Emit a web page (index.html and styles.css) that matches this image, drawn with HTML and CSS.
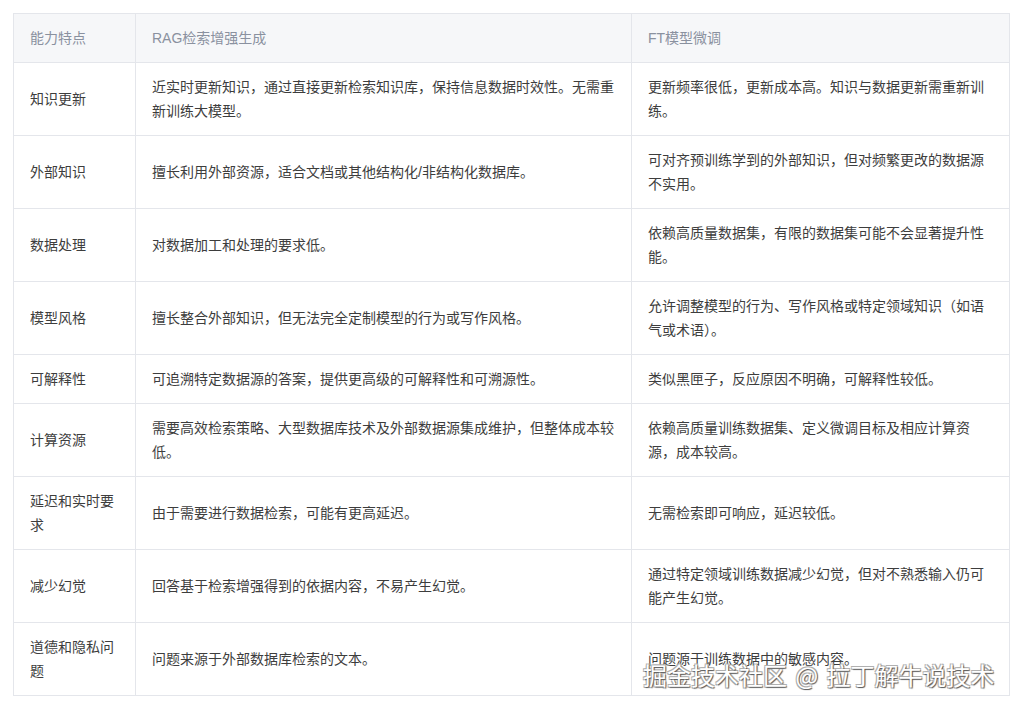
FILE: index.html
```html
<!DOCTYPE html>
<html>
  <head>
    <title>RAG vs FT</title>
    <link rel="stylesheet" href="styles.css">
  </head>
  <body>
    <div id="page">
      <table id="compare-table">
        <colgroup>
          <col class="col-feature">
          <col class="col-rag">
          <col class="col-ft">
        </colgroup>
        <thead>
          <tr>
            <th>能力特点</th>
            <th>RAG检索增强生成</th>
            <th>FT模型微调</th>
          </tr>
        </thead>
        <tbody>
          <tr>
            <td>知识更新</td>
            <td>近实时更新知识，通过直接更新检索知识库，保持信息数据时效性。无需重新训练大模型。</td>
            <td>更新频率很低，更新成本高。知识与数据更新需重新训练。</td>
          </tr>
          <tr>
            <td>外部知识</td>
            <td>擅长利用外部资源，适合文档或其他结构化/非结构化数据库。</td>
            <td>可对齐预训练学到的外部知识，但对频繁更改的数据源不实用。</td>
          </tr>
          <tr>
            <td>数据处理</td>
            <td>对数据加工和处理的要求低。</td>
            <td>依赖高质量数据集，有限的数据集可能不会显著提升性能。</td>
          </tr>
          <tr>
            <td>模型风格</td>
            <td>擅长整合外部知识，但无法完全定制模型的行为或写作风格。</td>
            <td>允许调整模型的行为、写作风格或特定领域知识（如语气或术语）。</td>
          </tr>
          <tr>
            <td>可解释性</td>
            <td>可追溯特定数据源的答案，提供更高级的可解释性和可溯源性。</td>
            <td>类似黑匣子，反应原因不明确，可解释性较低。</td>
          </tr>
          <tr>
            <td>计算资源</td>
            <td>需要高效检索策略、大型数据库技术及外部数据源集成维护，但整体成本较低。</td>
            <td>依赖高质量训练数据集、定义微调目标及相应计算资源，成本较高。</td>
          </tr>
          <tr>
            <td>延迟和实时要求</td>
            <td>由于需要进行数据检索，可能有更高延迟。</td>
            <td>无需检索即可响应，延迟较低。</td>
          </tr>
          <tr>
            <td>减少幻觉</td>
            <td>回答基于检索增强得到的依据内容，不易产生幻觉。</td>
            <td>通过特定领域训练数据减少幻觉，但对不熟悉输入仍可能产生幻觉。</td>
          </tr>
          <tr>
            <td>道德和隐私问题</td>
            <td>问题来源于外部数据库检索的文本。</td>
            <td>问题源于训练数据中的敏感内容。</td>
          </tr>
        </tbody>
      </table>
      <div class="watermark">掘金技术社区 @ 拉丁解牛说技术</div>
    </div>
  </body>
</html>
```

FILE: styles.css
```css
* {
  margin: 0;
  padding: 0;
  box-sizing: border-box;
}

body {
  font-family: "Liberation Sans", "Noto Sans CJK SC", sans-serif;
  background-color: #ffffff;
  color: #3d3d3d;
  font-size: 14px;
}

#page {
  position: relative;
  padding: 13px 13px 0 13px;
}

#compare-table {
  width: 996px;
  table-layout: fixed;
  border-collapse: collapse;
  border: 1px solid #e4e6eb;
}

.col-feature {
  width: 122px;
}

.col-rag {
  width: 496px;
}

.col-ft {
  width: 378px;
}

#compare-table th,
#compare-table td {
  border: 1px solid #e4e6eb;
  padding: 12px 16px;
  line-height: 24px;
  text-align: left;
  vertical-align: middle;
}

#compare-table th {
  background-color: #f6f7f9;
  color: #8a919f;
  font-weight: normal;
}

/* watermark sits over the last row, as in the source image */
.watermark {
  position: absolute;
  left: 643px;
  top: 660px;
  font-family: "Noto Sans CJK SC", sans-serif;
  font-size: 24px;
  line-height: 30px;
  word-spacing: 3px;
  color: #ffffff;
  white-space: nowrap;
  text-shadow: 1px 1px 1px #5a5a5a, -1px -1px 0 #b0b0b0, 1px -1px 0 #b0b0b0, -1px 1px 0 #b0b0b0;
}
```
